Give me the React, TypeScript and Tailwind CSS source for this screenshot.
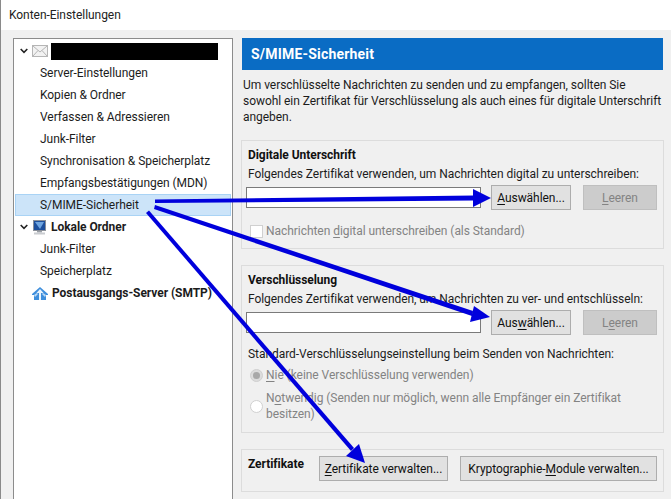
const font = "font-['Roboto',sans-serif]"

function Key({ children }: { children: string }) {
  return <span className="underline underline-offset-2">{children}</span>
}

function TreeRow({ label, selected }: { label: string; selected?: boolean }) {
  return (
    <div
      className={
        selected
          ? "h-[22px] pl-[24px] flex items-center border border-[#a9d3f5] bg-[#cce4f9]"
          : "h-[22px] pl-[25px] flex items-center"
      }
    >
      {label}
    </div>
  )
}

function Chevron() {
  return (
    <svg width="8" height="6" viewBox="0 0 8 6" className="shrink-0">
      <path d="M0.700 1l3.300 3.300L7.300 1" fill="none" stroke="#222" strokeWidth="1.600" />
    </svg>
  )
}

function Btn({ children, disabled, className }: { children: React.ReactNode; disabled?: boolean; className?: string }) {
  return (
    <div
      className={`h-[25px] flex items-center justify-center border ${
        disabled ? "bg-[#cccccc] border-[#bfbfbf] text-[#838383]" : "bg-[#e1e1e1] border-[#adadad] text-[#111]"
      } ${className}`}
    >
      {children}
    </div>
  )
}

export default function App() {
  return (
    <div className={`relative w-[671px] h-[499px] overflow-hidden bg-[#f0f0f0] text-[12px] leading-4 tracking-[-0.05px] whitespace-nowrap text-[#1c1c1c] border-l border-[#8a8a8a] ${font}`}>
      <div className="h-[30px] bg-white pl-[8px] flex items-center text-[#222]">Konten-Einstellungen</div>

      <div className="flex pl-[12px] pt-2 gap-[8px]">
        <div className="w-[220px] h-[470px] shrink-0 bg-white border border-[#8c8c8c] px-px pt-px">
          <div className="h-[22px] pl-[5px] flex items-center">
            <Chevron />
            <svg width="16" height="12" viewBox="0 0 16 12" className="ml-[4px] shrink-0">
              <rect x="0.500" y="0.500" width="15" height="11" fill="#f2f2f2" stroke="#b5b5b5" />
              <path d="M1 1l7 6 7-6M1 11l5-5.500M15 11l-5-5.500" fill="none" stroke="#b5b5b5" />
            </svg>
            <div className="ml-[3px] w-[167px] h-[17px] bg-black" />
          </div>
          <TreeRow label="Server-Einstellungen" />
          <TreeRow label="Kopien & Ordner" />
          <TreeRow label="Verfassen & Adressieren" />
          <TreeRow label="Junk-Filter" />
          <TreeRow label="Synchronisation & Speicherplatz" />
          <TreeRow label="Empfangsbestätigungen (MDN)" />
          <TreeRow label="S/MIME-Sicherheit" selected />
          <div className="h-[22px] pl-[5px] flex items-center font-bold">
            <Chevron />
            <svg width="15" height="15" viewBox="0 0 15 15" className="ml-[4px] shrink-0">
              <rect x="1.500" y="0.500" width="12" height="10" fill="#1d4f9c" stroke="#8a8f98" />
              <path d="M3 2l5 7 4-7z" fill="#6fa5e0" />
              <rect x="5" y="11" width="5" height="1.500" fill="#9aa0a6" />
              <rect x="2" y="12.500" width="11" height="2" fill="#c9ccd0" />
            </svg>
            <span className="ml-[4px]">Lokale Ordner</span>
          </div>
          <TreeRow label="Junk-Filter" />
          <TreeRow label="Speicherplatz" />
          <div className="h-[22px] pl-[17px] flex items-center font-bold">
            <svg width="16" height="13" viewBox="0 0 16 13" className="shrink-0">
              <path d="M8 0L0 7v1h2v5h12V8h2V7z" fill="#3f8fdc" />
              <path d="M2 8l3-2 1 1-3 3zM14 8l-3-2-1 1 3 3z" fill="#bcd9f4" />
              <path d="M8 2L4.500 6H7v7h2V6h2.500z" fill="#eaf4fd" />
            </svg>
            <span className="ml-[4px]">Postausgangs-Server (SMTP)</span>
          </div>
        </div>

        <div className="w-[423px] shrink-0">
          <div className="mx-px h-[32px] bg-[#0a6cc4] text-white font-bold text-[14px] tracking-[0.2px] flex items-center pl-[9px]">S/MIME-Sicherheit</div>
          <p className="mt-[7px] pl-[2px]">
            Um verschlüsselte Nachrichten zu senden und zu empfangen, sollten Sie
            <br />
            sowohl ein Zertifikat für Verschlüsselung als auch eines für digitale Unterschrift
            <br />
            angeben.
          </p>

          <div className="mt-[15px] h-[109px] border border-[#dcdcdc] pl-[6px] pt-[6px]">
            <div className="font-bold text-[#111]">Digitale Unterschrift</div>
            <div className="mt-[3px]">Folgendes Zertifikat verwenden, um Nachrichten digital zu unterschreiben:</div>
            <div className="mt-[3px] flex items-center">
              <div className="-ml-[2px] w-[235px] h-[21px] bg-white border border-[#7a7a7a]" />
              <Btn className="ml-[10px] w-[80px]"><span><Key>A</Key>uswählen...</span></Btn>
              <Btn disabled className="ml-[12px] w-[74px]"><span><Key>L</Key>eeren</span></Btn>
            </div>
            <div className="mt-[13px] pl-[2px] flex items-center text-[#838383]">
              <div className="w-[13px] h-[13px] bg-white border border-[#d0d0d0]" />
              <span className="ml-[3px]">Nachrichten <Key>d</Key>igital unterschreiben (als Standard)</span>
            </div>
          </div>

          <div className="mt-[16px] h-[168px] border border-[#dcdcdc] pl-[6px] pt-[6px]">
            <div className="font-bold text-[#111]">Verschlüsselung</div>
            <div className="mt-[3px]">Folgendes Zertifikat verwenden, um Nachrichten zu ver- und entschlüsseln:</div>
            <div className="mt-[3px] flex items-center">
              <div className="-ml-[2px] w-[235px] h-[21px] bg-white border border-[#7a7a7a]" />
              <Btn className="ml-[10px] w-[80px]"><span>Aus<Key>w</Key>ählen...</span></Btn>
              <Btn disabled className="ml-[12px] w-[74px]"><span>L<Key>e</Key>eren</span></Btn>
            </div>
            <div className="mt-[11px]">Standard-Verschlüsselungseinstellung beim Senden von Nachrichten:</div>
            <div className="mt-[5px] pl-[2px] flex items-center text-[#838383]">
              <div className="w-[13px] h-[13px] rounded-full bg-[#dcdcdc] border border-[#cfcfcf] flex items-center justify-center">
                <div className="w-[7px] h-[7px] rounded-full bg-[#a8a8a8]" />
              </div>
              <span className="ml-[3px]"><Key>N</Key>ie (keine Verschlüsselung verwenden)</span>
            </div>
            <div className="mt-[7px] pl-[2px] flex items-center text-[#838383]">
              <div className="w-[13px] h-[13px] rounded-full bg-white border border-[#d0d0d0] shrink-0" />
              <span className="ml-[3px]">
                N<Key>o</Key>twendig (Senden nur möglich, wenn alle Empfänger ein Zertifikat
                <br />
                besitzen)
              </span>
            </div>
          </div>

          <div className="mt-[16px] h-[43px] border border-[#dcdcdc] pl-[6px] pt-[6px] flex items-start">
            <span className="w-[71px] shrink-0 font-bold text-[#111]">Zertifikate</span>
            <Btn className="w-[129px]"><span><Key>Z</Key>ertifikate verwalten...</span></Btn>
            <Btn className="ml-[12px] w-[197px]"><span>Kryptographie-<Key>M</Key>odule verwalten...</span></Btn>
          </div>
        </div>
      </div>

      <svg width="671" height="499" viewBox="0 0 671 499" className="absolute -left-px top-0 pointer-events-none">
        <g fill="#0000dc">
          <path d="M155 199.500L474 195.500L474 200.500L155 203z" />
          <path d="M155 205L473 311L472 316L154 209z" />
          <path d="M149 210.500L354 448L351 451L146 213z" />
          <path d="M491 198L473 189L473 207z" />
          <path d="M490 317L474 306L470 322z" />
          <path d="M365 463L359 444L346 456z" />
        </g>
      </svg>
    </div>
  )
}
